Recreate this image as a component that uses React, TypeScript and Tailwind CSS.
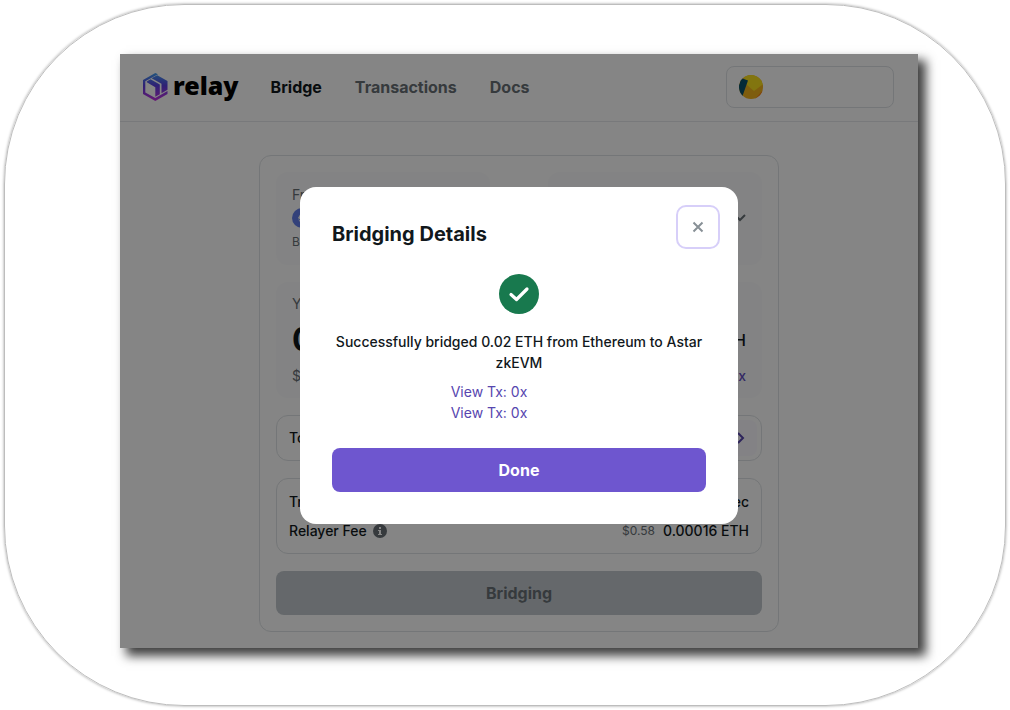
import React from "react";

function RelayMark() {
  return (
    <svg viewBox="0 0 25 28" className="h-[28px] w-[25px] shrink-0" aria-hidden="true">
      <defs>
        <linearGradient id="mark" gradientUnits="userSpaceOnUse" x1="12" y1="0" x2="12" y2="28">
          <stop offset="0" stopColor="#3fa0f0" />
          <stop offset="0.45" stopColor="#5a3fe0" />
          <stop offset="1" stopColor="#c832e0" />
        </linearGradient>
      </defs>
      <g fill="url(#mark)">
        <path d="M12.300 0 15 1.300 2.300 8.200V19.500L12.300 25 24.500 18V21L12.300 28 0 21V7Z" />
        <path d="M14.200 2.200 24.500 7.900V16.800L18.500 20.300V10.700L8.600 5.200Z" />
        <path d="M7.500 6.200 16.800 11.500V21.200L12.300 23.700V14.200L3.800 9.300V8.400Z" />
      </g>
    </svg>
  );
}

function Avatar() {
  return (
    <svg viewBox="0 0 24 24" className="size-6" aria-hidden="true">
      <defs>
        <clipPath id="disc"><circle cx="12" cy="12" r="12" /></clipPath>
      </defs>
      <g clipPath="url(#disc)">
        <path fill="#f2b31c" d="M0 0h24v24H0z" />
        <path fill="#fae01e" d="M3-2h24v9L15 16 8 10Z" />
        <path fill="#08516b" d="M2 3 9 5.500 3.500 21-3 20Z" />
        <path fill="#fa7b14" d="M24 15v9h-8Z" />
      </g>
    </svg>
  );
}

function Header() {
  return (
    <header className="flex h-[68px] items-center border-b border-[#e6e8eb] pr-6 pb-[2px] pl-[23px]">
      <a href="#home" aria-label="relay" className="flex items-center gap-[5px] text-black">
        <RelayMark />
        <span className="pb-[3px] font-['Noto_Sans',sans-serif] text-[25px] leading-8 font-black">relay</span>
      </a>
      <nav className="ml-8 flex gap-[33px] text-base leading-6 font-bold text-[#687076]">
        <a href="#bridge" className="text-[#11181c]">Bridge</a>
        <a href="#transactions">Transactions</a>
        <a href="#docs">Docs</a>
      </nav>
      <button aria-label="Account" className="ml-auto flex h-[42px] w-[168px] items-center rounded-lg border border-[#dfe3e6] px-3">
        <Avatar />
      </button>
    </header>
  );
}

function ChainPanel({ label, chain, balance }: { label: string; chain: string; balance: string }) {
  return (
    <div className="h-[93px] w-[214px] rounded-xl bg-[#fbfcfd] px-4 py-3 text-[#687076]">
      <div className="text-sm leading-[22px]">{label}</div>
      <button className="flex w-full items-center gap-2 text-left text-sm leading-6">
        <span className="flex size-5 items-center justify-center rounded-full bg-[#627eea]">
          <svg viewBox="0 0 20 20" className="size-5" fill="#fff" aria-hidden="true"><path d="m10 3 4 7-4 3-4-3Zm0 11 4-3-4 6-4-6Z" /></svg>
        </span>
        <span className="flex-1">{chain}</span>
        <svg viewBox="0 0 12 8" className="h-2 w-3" fill="none" stroke="currentColor" strokeWidth="2" aria-hidden="true"><path d="m1 1 5 5 5-5" /></svg>
      </button>
      <div className="text-xs leading-6">{balance}</div>
    </div>
  );
}

function BridgeCard() {
  return (
    <main className="mx-auto mt-[33px] flex w-[520px] flex-col gap-[17px] rounded-xl border border-[#dfe3e6] p-4 text-sm font-medium text-[#11181c]">
      <div className="flex justify-between font-normal">
        <ChainPanel label="From" chain="Ethereum" balance="Balance" />
        <ChainPanel label="To" chain="Astar" balance="Balance" />
      </div>
      <div className="h-[116px] rounded-xl bg-[#fbfcfd] px-4 py-3 font-normal text-[#687076]">
        <div className="leading-5">You send</div>
        <div className="flex h-[52px] items-center justify-between text-[#11181c]">
          <span className="text-[32px] font-bold">0.02</span>
          <span className="text-base font-medium">ETH</span>
        </div>
        <div className="flex justify-between leading-5">
          <span>$</span>
          <button className="font-medium text-[#644fc1]">Max</button>
        </div>
      </div>
      <div className="flex h-[46px] items-center justify-between rounded-xl border border-[#dfe3e6] pr-1 pl-3">
        <span>To address</span>
        <button aria-label="Change address" className="flex h-9 w-9 items-center justify-end rounded-lg bg-[#fbfaff] pr-3 text-[#5746af]">
          <svg viewBox="0 0 8 12" className="h-3 w-2" fill="none" stroke="currentColor" strokeWidth="2" aria-hidden="true"><path d="m1 1 5 5-5 5" /></svg>
        </button>
      </div>
      <div className="flex h-[76px] flex-col justify-center gap-[9px] rounded-xl border border-[#dfe3e6] px-3 leading-5">
        <div className="flex justify-between"><span>Transaction Time</span><span>30 sec</span></div>
        <div className="flex items-center">
          <span>Relayer Fee</span>
          <svg viewBox="0 0 14 14" className="ml-[6px] size-[14px]" aria-hidden="true">
            <circle cx="7" cy="7" r="7" fill="#687076" />
            <path d="M6 3h2v2H6zM5 6h3v4h1v1H5v-1h1V7H5z" fill="#fff" />
          </svg>
          <span className="ml-auto text-xs font-normal text-[#687076]">$0.58</span>
          <span className="ml-2">0.00016 ETH</span>
        </div>
      </div>
      <button disabled className="h-11 rounded-lg bg-[#c1c8cd] text-base font-bold text-[#687076]">Bridging</button>
    </main>
  );
}

function BridgingDialog() {
  return (
    <div className="absolute inset-0 flex items-center justify-center bg-black/48 pt-[9px]">
      <section role="dialog" aria-modal="true" aria-labelledby="dialog-title" className="w-[438px] rounded-2xl bg-white px-8 pt-[18px] pb-8 text-[#11181c]">
        <div className="-mr-[14px] flex items-start justify-between">
          <h2 id="dialog-title" className="pt-[15px] text-xl leading-7 font-bold">Bridging Details</h2>
          <button aria-label="Close" className="flex size-11 items-center justify-center rounded-[10px] border-2 border-[#d7cff9] text-[#889096]">
            <svg viewBox="0 0 12 12" className="size-3" fill="none" stroke="currentColor" strokeWidth="2" aria-hidden="true"><path d="m1.500 1.500 9 9m0-9-9 9" /></svg>
          </button>
        </div>
        <div className="mt-[25px] flex flex-col items-center text-sm leading-[21px]">
          <svg viewBox="0 0 40 40" className="size-10" aria-hidden="true">
            <circle cx="20" cy="20" r="20" fill="#18794e" />
            <path d="m12 20.500 5.500 5L28 15" fill="none" stroke="#fff" strokeWidth="3.200" strokeLinecap="round" strokeLinejoin="round" />
          </svg>
          <p className="mt-[17px] text-center font-medium">Successfully bridged 0.02 ETH from Ethereum to Astar zkEVM</p>
          <div className="mt-2 mr-[60px] flex flex-col text-[#5746af]">
            <a href="#tx-1">View Tx: 0x</a>
            <a href="#tx-2">View Tx: 0x</a>
          </div>
        </div>
        <button className="mt-[25px] h-11 w-full rounded-lg bg-[#6e56cf] text-base font-bold text-white">Done</button>
      </section>
    </div>
  );
}

export default function App() {
  return (
    <div className="min-h-screen bg-white p-1 font-[Inter,sans-serif]">
      <div className="flex min-h-[702px] flex-col rounded-[180px] border border-[#bdbdbd] pt-[49px] pr-[87px] pb-[57px] pl-[115px] shadow-[0_0_3px_#999]">
        <div className="relative flex-1 bg-white shadow-[7px_7px_10px_1px_rgba(0,0,0,0.75)]">
          <Header />
          <BridgeCard />
          <BridgingDialog />
        </div>
      </div>
    </div>
  );
}
